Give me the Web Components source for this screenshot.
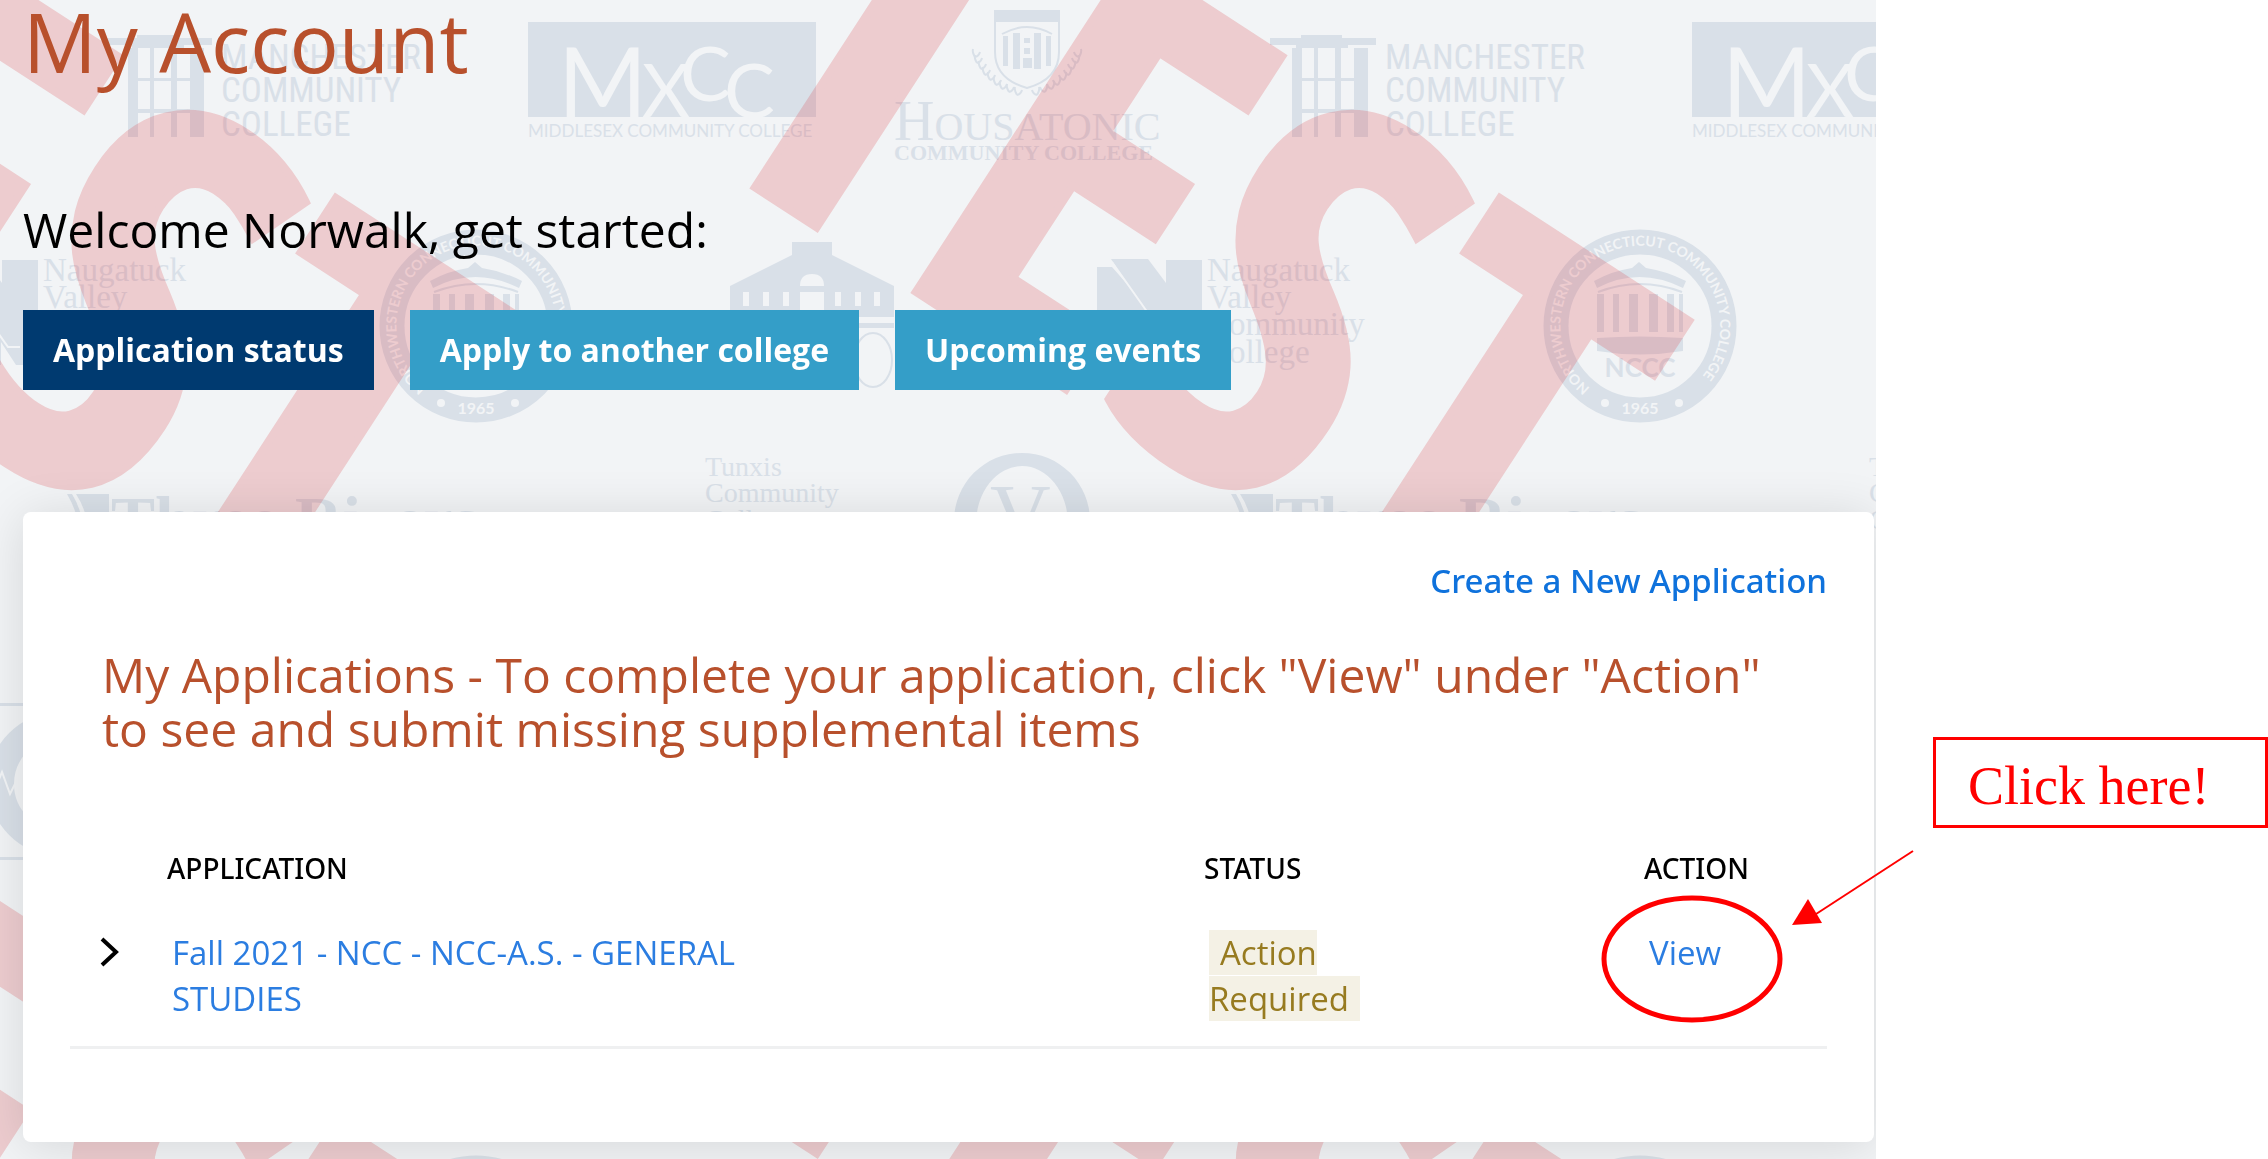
<!DOCTYPE html>
<html lang="en">
<head>
<meta charset="utf-8">
<title>My Account</title>
<style>
	body {
		margin: 0;
		background: #fff;
		color: #000;
		font-family: 'Open Sans', 'Noto Sans', sans-serif;
	}
</style>
</head>
<body>
<account-page>
	<college-watermark slot="background"></college-watermark>
	<account-header>
		<span slot="title">My Account</span>
		<span slot="welcome">Welcome Norwalk, get started:</span>
		<tab-button active>Application status</tab-button>
		<tab-button>Apply to another college</tab-button>
		<tab-button>Upcoming events</tab-button>
	</account-header>
	<application-card>
		<span slot="create">Create a New Application</span>
		<span slot="heading">My Applications - To complete your application, click "View" under "Action" to see and submit missing supplemental items</span>
		<application-table></application-table>
	</application-card>
	<click-callout slot="aside">Click here!</click-callout>
</account-page>

<script>
/**
 * Create a <template> from markup.
 * @param {string} html
 */
function makeTemplate(html) {
	const template = document.createElement('template')
	template.innerHTML = html
	return template
}

/**
 * Base class, clones the template of the subclass into an open shadow root.
 */
class TemplateElement extends HTMLElement {
	constructor() {
		super()
		const shadowRoot = this.attachShadow({ mode: 'open' })
		shadowRoot.appendChild(this.constructor.template.content.cloneNode(true))
	}
}

/**
 * Page frame: the account panel with its background, and the notes beside it.
 */
class AccountPage extends TemplateElement {
	static template = makeTemplate(`
		<style>
			:host {
				display: grid;
				grid-template-columns: minmax(0, 1fr) 392px;
				min-height: 100vh;
				position: relative;
			}

			main {
				position: relative;
				overflow: hidden;
				box-sizing: border-box;
				padding: 0 2px 16px 23px;
				background: #f2f4f6;
			}

			.content {
				position: relative;
			}
		</style>

		<main>
			<slot name="background"></slot>
			<div class="content"><slot></slot></div>
		</main>
		<slot name="aside"></slot>
	`)
}

/**
 * Page title, welcome line and the row of tabs.
 */
class AccountHeader extends TemplateElement {
	static template = makeTemplate(`
		<style>
			:host {
				display: block;
			}

			h1 {
				margin: 0;
				font-size: 82px;
				font-weight: 400;
				line-height: 82px;
				color: #b8502c;
			}

			h2 {
				margin: 120px 0 52px;
				font-size: 48px;
				font-weight: 400;
				line-height: 56px;
			}

			nav {
				display: flex;
				gap: 36px;
			}
		</style>

		<h1><slot name="title"></slot></h1>
		<h2><slot name="welcome"></slot></h2>
		<nav><slot></slot></nav>
	`)
}

class TabButton extends TemplateElement {
	static template = makeTemplate(`
		<style>
			:host {
				display: block;
			}

			button {
				height: 80px;
				padding: 0 30px;
				border: 0;
				background: #349ec8;
				color: #fff;
				font: 700 32px/40px 'Open Sans', 'Noto Sans', sans-serif;
				cursor: pointer;
			}

			:host([active]) button {
				background: #003a70;
			}
		</style>

		<button type="button"><slot></slot></button>
	`)
}

class ApplicationCard extends TemplateElement {
	static template = makeTemplate(`
		<style>
			:host {
				display: block;
				margin-top: 122px;
				padding: 46px 47px 93px;
				border-radius: 8px;
				background: #fff;
				box-shadow: 0 4px 50px rgba(0, 0, 0, .12);
			}

			.create {
				display: block;
				text-align: right;
				font: 500 33px/46px 'Noto Sans', 'Open Sans', sans-serif;
				color: #0f72dc;
				text-decoration: none;
			}

			h3 {
				margin: 44px 0 93px;
				padding: 0 32px;
				font-size: 48px;
				font-weight: 400;
				line-height: 54px;
				color: #b8502c;
			}
		</style>

		<a class="create" href="#new"><slot name="create"></slot></a>
		<h3><slot name="heading"></slot></h3>
		<slot></slot>
	`)
}

class ApplicationTable extends TemplateElement {
	static template = makeTemplate(`
		<style>
			:host {
				display: block;
			}

			table {
				width: 100%;
				table-layout: fixed;
				border-collapse: collapse;
				font-size: 33px;
				line-height: 46px;
			}

			.toggle { width: 96px; }
			.status { width: 440px; }
			.action { width: 184px; }

			th {
				padding: 0 0 43px 1px;
				text-align: left;
				font: 500 28px/38px 'Noto Sans', 'Open Sans', sans-serif;
			}

			td {
				padding: 0 0 24px 6px;
				vertical-align: top;
				border-bottom: 3px solid #eff0f1;
			}

			td div {
				max-width: 600px;
			}

			td .narrow {
				max-width: 200px;
			}

			a {
				color: #2b7de1;
				text-decoration: none;
			}

			button {
				display: block;
				margin: 7px 0 0 24px;
				padding: 0;
				border: 0;
				background: none;
				cursor: pointer;
			}

			svg {
				display: block;
			}

			mark {
				padding: 0 11px;
				background: #f4f1e5;
				color: #977b20;
			}
		</style>

		<table>
			<colgroup>
				<col class="toggle"><col><col class="status"><col class="action">
			</colgroup>
			<thead>
				<tr>
					<th></th>
					<th scope="col">APPLICATION</th>
					<th scope="col">STATUS</th>
					<th scope="col">ACTION</th>
				</tr>
			</thead>
			<tbody>
				<tr>
					<td>
						<button type="button" aria-label="Show details">
							<svg width="20" height="30" viewBox="0 0 20 30" fill="none" stroke="#000" stroke-width="4">
								<path d="M2 2L16 15L2 28"/>
							</svg>
						</button>
					</td>
					<td><div><a href="#application">Fall 2021 - NCC - NCC-A.S. - GENERAL STUDIES</a></div></td>
					<td><div class="narrow"><mark>Action Required</mark></div></td>
					<td><a href="#view">View</a></td>
				</tr>
			</tbody>
		</table>
	`)
}

/**
 * Boxed note with an arrow and a ring round the link it talks about.
 */
class ClickCallout extends TemplateElement {
	static template = makeTemplate(`
		<style>
			:host {
				display: block;
				padding: 737px 0 0 57px;
			}

			p {
				margin: 0;
				padding: 16px 32px 8px;
				border: 3px solid #f00;
				color: #f00;
				font: 54px/61px 'Liberation Serif', 'Times New Roman', serif;
			}

			svg {
				position: absolute;
				top: 839px;
				right: 340px;
				pointer-events: none;
			}
		</style>

		<p><slot></slot></p>
		<svg width="340" height="200" viewBox="0 0 340 200">
			<ellipse cx="104" cy="120" rx="88" ry="61" fill="none" stroke="#f00" stroke-width="5"/>
			<path d="M325 12L225 77" stroke="#f00" stroke-width="2"/>
			<path d="M204 86L220 60L234 84Z" fill="#f00"/>
		</svg>
	`)
}

/**
 * Repeating background of college logos with a slanted TEST mark over it.
 */
const TILE_WIDTH = 1164
const TILE_HEIGHT = 926

// One side of the laurel under the Housatonic shield.
const laurel = [[-52, 57], [-50, 63], [-46, 69], [-42, 75], [-37, 80], [-31, 85], [-25, 89], [-18, 92], [-10, 95]]
	.map(([x, y]) => `<path d="M${x} ${y}q-3 -5 -2 -8M${x} ${y}q4 -1 5 -5"/>`)
	.join('')

const columns = [[-43, 7], [-27, 6], [-11, 9], [9, 9], [27, 7], [39, 4]]
	.map(([x, w]) => `<path d="M${x} -32h${w}v38h${-w}z"/>`)
	.join('')

const manchester = `
	<g class="manchester">
		<path d="M137 35h41v3h34v7h-28v3h-52v-3h-26v-7h31z"/>
		<path d="M128 48h10v89h-10zM150 48h4v89h-4zM171 48h6v89h-6zM190 48h14v89h-14zM128 78h76v3h-76zM128 109h76v4h-76z"/>
		<text x="221" y="69">MANCHESTER</text>
		<text x="221" y="102">COMMUNITY</text>
		<text x="221" y="136">COLLEGE</text>
	</g>
`

const middlesex = `
	<g class="middlesex">
		<path d="M528 22h288v95h-288z"/>
		<text class="cut" x="558" y="117" font-size="96">M</text>
		<text class="cut" x="642" y="117" font-size="74">X</text>
		<text class="cut" x="680" y="101" font-size="76">C</text>
		<text class="cut" x="724" y="118" font-size="76">C</text>
		<text x="528" y="137" font-size="17">MIDDLESEX COMMUNITY COLLEGE</text>
	</g>
`

const housatonic = `
	<g class="housatonic">
		<path d="M994 10h66v12h-66z"/>
		<path class="line" d="M995 20v32c0 20 14 31 32 36c18 -5 32 -16 32 -36v-32M1002 34q25 -14 50 0"/>
		<path d="M1003 36h5v30h-5zM1013 33h7v36h-7zM1034 33h7v36h-7zM1046 36h5v30h-5zM1024 38h6v5h-6zM1024 48h6v6h-6zM1023 58h9v10h-9z"/>
		<g class="line" transform="translate(1027 0)">${laurel}</g>
		<g class="line" transform="translate(1027 0) scale(-1 1)">${laurel}</g>
		<text x="894" y="140" font-size="56">H<tspan font-size="40">OUSATONIC</tspan></text>
		<text x="894" y="160" font-size="22" font-weight="700">COMMUNITY COLLEGE</text>
	</g>
`

const naugatuck = `
	<g class="naugatuck">
		<path d="M-67 267h15l53 60v38h-68zM-53 259h37l18 24v-23h36v105h-22z"/>
		<path class="cut-line" d="M-52 262L8 347h12"/>
		<text x="43" y="281">Naugatuck</text>
		<text x="43" y="308">Valley</text>
		<text x="43" y="335">Community</text>
		<text x="43" y="363">College</text>
	</g>
`

const sealRing = `
	<circle cx="476" cy="326" r="84" fill="none" stroke="#d9e0e8" stroke-width="25"/>
`

const seal = (column) => `
	${sealRing}
	<g class="seal" transform="translate(476 326)">
		<path id="ring-${column}" fill="none" d="M-50 62A80 80 0 1 1 54 59"/>
		<text class="cut" font-size="14" font-weight="700"><textPath href="#ring-${column}">NORTHWESTERN CONNECTICUT COMMUNITY COLLEGE</textPath></text>
		<text class="cut" y="88" font-size="16" font-weight="700" text-anchor="middle">1965</text>
		<circle class="cut" cx="-35" cy="77" r="4"/>
		<circle class="cut" cx="39" cy="77" r="4"/>
		<path d="M-46 -45l3 7q42 -22 86 0l3 -7q-20 -10 -40 -13l-7 -6l-7 6q-20 3 -38 13z"/>
		<path class="line" d="M-42 -34q42 -16 84 0"/>
		${columns}
		<path d="M-43 12q43 -3 86 0v13q-43 7 -86 0z"/>
		<text y="51" font-size="26" font-weight="700" text-anchor="middle">NCCC</text>
	</g>
`

const capital = `
	<g class="capital">
		<path d="M792 242h40v13l62 31v31h-164v-31l62 -31z"/>
		<path class="cut" d="M800 286q0 -12 12 -12t12 12zM800 292h24v25h-24zM743 292h6v14h-6zM763 292h6v14h-6zM783 292h6v14h-6zM835 292h6v14h-6zM855 292h6v14h-6zM874 292h6v14h-6z"/>
		<path d="M730 323h164v5h-164z"/>
		<ellipse class="line" cx="873" cy="360" rx="19" ry="27"/>
	</g>
`

const tunxis = `
	<g class="tunxis">
		<text x="705" y="476">Tunxis</text>
		<text x="705" y="502">Community</text>
		<text x="705" y="529">College</text>
	</g>
`

const quinebaug = `
	<g class="quinebaug">
		<path fill-rule="evenodd" d="M954 521a68 68 0 1 1 136 0a68 68 0 1 1 -136 0zM976 524a46 58 0 1 0 92 0a46 58 0 1 0 -92 0z"/>
		<text x="990" y="543">V</text>
	</g>
`

const rivers = `
	<g class="rivers">
		<path d="M67 494q12 20 14 46h5q-3 -28 -14 -46zM76 494h33v46h-19q-2 -28 -14 -46z"/>
		<text x="111" y="542">Three Rivers</text>
	</g>
`

const norwalk = `
	<g class="norwalk">
		<path d="M-60 703h240v3h-240zM-60 857h240v3h-240z"/>
		<circle cx="60" cy="784" r="59" fill="none" stroke="#d9e0e8" stroke-width="26"/>
		<path class="cut-line" d="M-8 796l10 -24l8 22l6 -12l6 14"/>
	</g>
`

const test = '<text transform="translate(685 142) rotate(33)">TEST</text>'

/**
 * Place drawings in one cell of the repeating background.
 */
const tile = (column, row, ...drawings) => `
	<g transform="translate(${column * TILE_WIDTH} ${row * TILE_HEIGHT})">${drawings.join('')}</g>
`

class CollegeWatermark extends TemplateElement {
	static template = makeTemplate(`
		<style>
			:host {
				display: block;
				position: absolute;
				inset: 0;
				overflow: hidden;
			}

			svg {
				display: block;
				width: 100%;
				height: 100%;
			}

			.logos {
				fill: #d9e0e8;
			}

			.line {
				fill: none;
				stroke: #d9e0e8;
				stroke-width: 2;
			}

			.cut {
				fill: #f2f4f6;
			}

			.cut-line {
				fill: none;
				stroke: #f2f4f6;
				stroke-width: 2;
			}

			.manchester {
				font: 35px 'Roboto Condensed', Roboto, sans-serif;
			}

			.middlesex,
			.seal {
				font-family: Lato, sans-serif;
			}

			.housatonic,
			.naugatuck,
			.tunxis,
			.quinebaug,
			.rivers {
				font-family: 'Liberation Serif', serif;
			}

			.naugatuck { font-size: 33px; }
			.tunxis { font-size: 28px; }
			.quinebaug { font-size: 84px; }

			.rivers {
				font-size: 66px;
				font-weight: 700;
			}

			.test {
				opacity: .2;
				fill: #d93138;
				stroke: #d93138;
				stroke-width: 8;
				font: 700 556px 'Open Sans Condensed', 'Open Sans', sans-serif;
			}
		</style>

		<svg aria-hidden="true">
			<g class="logos">
				${tile(0, 0, manchester, middlesex, housatonic, naugatuck, seal(0), capital, tunxis, quinebaug, rivers, norwalk)}
				${tile(1, 0, manchester, middlesex, naugatuck, seal(1), tunxis, rivers)}
				${tile(0, 1, sealRing)}
				${tile(1, 1, sealRing)}
			</g>
			<g class="test">
				${tile(-1, 0, test)}
				${tile(0, 0, test)}
				${tile(-1, 1, test)}
				${tile(0, 1, test)}
			</g>
		</svg>
	`)
}

customElements.define('account-page', AccountPage)
customElements.define('account-header', AccountHeader)
customElements.define('tab-button', TabButton)
customElements.define('application-card', ApplicationCard)
customElements.define('application-table', ApplicationTable)
customElements.define('click-callout', ClickCallout)
customElements.define('college-watermark', CollegeWatermark)
</script>
</body>
</html>
